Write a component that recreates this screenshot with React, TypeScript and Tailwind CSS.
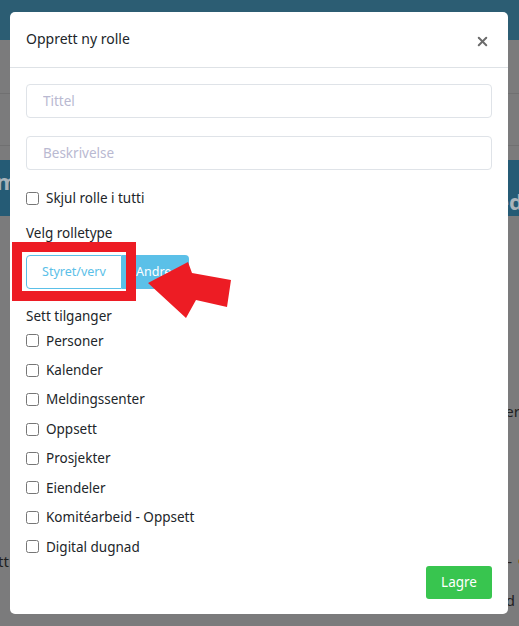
import { X } from 'lucide-react'

const permissions = [
  'Personer',
  'Kalender',
  'Meldingssenter',
  'Oppsett',
  'Prosjekter',
  'Eiendeler',
  'Komitéarbeid - Oppsett',
  'Digital dugnad',
]

const font = { fontFamily: '"Noto Sans", "Open Sans", Arial, sans-serif' }

function Checkbox({ label }: { label: string }) {
  return (
    <label className="flex items-center h-[29.45px] text-[13.5px] text-[#212529]">
      <input type="checkbox" className="w-[13px] h-[13px] m-0 mr-[7px] shrink-0" />
      <span>{label}</span>
    </label>
  )
}

export default function App() {
  return (
    <div className="relative w-[519px] h-[626px] overflow-hidden bg-[#7b7b7c]" style={font}>
      {/* page behind the overlay */}
      <div className="h-[40px] bg-[#2c5d73]" />
      <div className="h-[54px] border-b border-[#707071]" />
      <div className="h-[52px] border-b border-[#707071]" />
      <div className="h-[14px]" />
      <div className="h-[56px] bg-[#255b75] flex justify-between text-[22px] font-bold text-[#a9b4bb] leading-none">
        <span className="pt-[10px] -ml-[4px]">m</span>
        <span className="pt-[30px] -mr-[4px]">ed</span>
      </div>
      <div className="flex justify-end h-[190px] pt-[188px] text-[15px] text-[#1f1f1f] leading-none">
        <span className="-mr-[1px]">er</span>
      </div>
      <div className="flex justify-between pt-[148px] text-[15px] text-[#1f1f1f] leading-none">
        <span className="-ml-[2px]">tt</span>
        <span className="flex items-center gap-[6px] -mr-[4px]">
          -<span className="w-[5px] h-[5px] rounded-full bg-[#8a6a22]" />
        </span>
      </div>
      <div className="flex justify-end pt-[24px] text-[15px] text-[#1f1f1f] leading-none">
        <span className="mr-[4px]">d</span>
      </div>

      {/* modal */}
      <div className="absolute left-[10px] top-[12px] w-[498px] h-[602px] bg-white rounded-[5px] flex flex-col">
        <div className="h-[56px] border-b border-[#dee2e6] flex items-center justify-between pl-[16px] pr-[18px]">
          <h2 className="text-[14px] text-[#212529] -mt-[3px]">Opprett ny rolle</h2>
          <X className="w-[15px] h-[15px] text-[#6b6b6b] mt-[3px]" strokeWidth={3.2} />
        </div>

        <div className="px-[16px] pt-[16px] flex flex-col">
          <input
            placeholder="Tittel"
            className="h-[34px] w-full border border-[#dfe3e8] rounded-[4px] px-[16px] text-[13.5px] placeholder:text-[#b9b9d1] outline-none"
          />
          <input
            placeholder="Beskrivelse"
            className="mt-[18px] h-[34px] w-full border border-[#dfe3e8] rounded-[4px] px-[16px] text-[13.5px] placeholder:text-[#b9b9d1] outline-none"
          />

          <div className="mt-[18px] h-[20px] flex items-center">
            <label className="flex items-center text-[13.5px] text-[#212529]">
              <input type="checkbox" className="w-[13px] h-[13px] m-0 mr-[7px]" />
              <span>Skjul rolle i tutti</span>
            </label>
          </div>

          <div className="mt-[15px] h-[20px] flex items-center text-[13.5px] text-[#212529]">Velg rolletype</div>

          <div className="relative mt-[12px] flex">
            <button className="h-[34px] w-[96px] border border-[#5bc0e8] rounded-l-[4px] bg-white text-[12.5px] text-[#5bc0e8]">
              Styret/verv
            </button>
            <button className="h-[34px] w-[67px] bg-[#5bc0e8] rounded-r-[4px] text-[12.5px] text-white text-left pl-[14px]">
              Andre
            </button>
            {/* annotation box */}
            <div className="absolute -left-[14px] -top-[13px] w-[124px] h-[59px] border-[10px] border-[#ed1c24]" />
            {/* annotation arrow */}
            <svg className="absolute left-[114px] top-0" width="100" height="70" viewBox="140 255 100 70">
              <polygon
                points="148,283 188,262 192,273 231,280 227,307 196,300 186,318"
                fill="#ed1c24"
              />
            </svg>
          </div>

          <div className="mt-[17px] h-[20px] flex items-center text-[13.5px] text-[#212529]">Sett tilganger</div>

          <div className="flex flex-col">
            {permissions.map((p) => (
              <Checkbox key={p} label={p} />
            ))}
          </div>
        </div>

        <div className="mt-auto flex justify-end px-[16px] pb-[15px]">
          <button className="h-[33px] w-[66px] rounded-[3px] bg-[#38c54f] text-white text-[13.5px]">Lagre</button>
        </div>
      </div>
    </div>
  )
}
